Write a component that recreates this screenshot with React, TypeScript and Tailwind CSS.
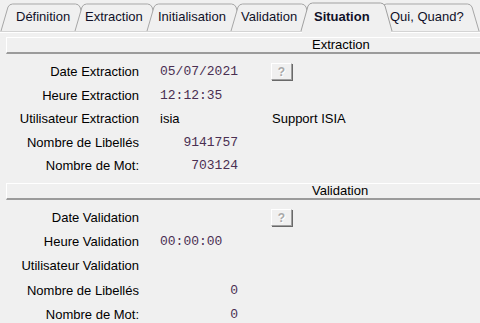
import React from "react";

const tabs = [
  { label: "Définition", w: 74, pl: 15 },
  { label: "Extraction", w: 72, pl: 10 },
  { label: "Initialisation", w: 84, pl: 11 },
  { label: "Validation", w: 70, pl: 10 },
  { label: "Situation", w: 77, pl: 13, active: true },
  { label: "Qui, Quand?", w: 100, pl: 12 },
];

function tabPath(a: number, r: number, top = 4) {
  return `M${a},31 L${a + 7},${top + 3} Q${a + 8.5},${top} ${a + 11.5},${top} L${r - 11.5},${top} Q${r - 8.5},${top} ${r - 7},${top + 3} L${r},31`;
}

function TabStrip() {
  const starts = [1, 75, 147, 231];
  return (
    <div className="relative h-[33px]">
      <svg className="absolute left-0 top-0" width="480" height="33" viewBox="0 0 480 33">
        <line x1="0" y1="31.5" x2="480" y2="31.5" stroke="#d4d4d4" />
        <line x1="0" y1="32.5" x2="480" y2="32.5" stroke="#ffffff" />
        {starts.map((a, i) => {
          const next = i < 3 ? starts[i + 1] : 301;
          return (
            <path key={i} d={tabPath(a, next + 12)} fill="#f0f0f0" stroke="#a7a7a7" strokeWidth="1" />
          );
        })}
        <path d={tabPath(375, 479)} fill="#f0f0f0" stroke="#a7a7a7" strokeWidth="1" />
        <path d={tabPath(301, 392, 3) + " Z"} fill="#f0f0f0" stroke="none" />
        <path d={tabPath(301, 392, 3)} fill="none" stroke="#a0a0a0" strokeWidth="1" />
        <rect x="302" y="31" width="89" height="3" fill="#f0f0f0" />
      </svg>
      <div className="relative flex pl-[1px]">
        {tabs.map((t) => (
          <div
            key={t.label}
            className={
              "h-[31px] shrink-0 whitespace-nowrap pt-[9px] leading-[16px] text-[13px] text-[#101028] " +
              (t.active ? "font-bold" : "")
            }
            style={{ width: t.w, paddingLeft: t.pl }}
          >
            {t.label}
          </div>
        ))}
      </div>
    </div>
  );
}

function SectionBar({ title }: { title: string }) {
  return (
    <div className="ml-[6px] h-[17px] border-l border-t border-b-2 border-l-white border-t-white border-b-[#9b9b9b] bg-[#f0f0f0] pl-[305px] text-[13px] leading-[14px] text-black whitespace-nowrap">
      {title}
    </div>
  );
}

function Row({ label, children, tall }: { label: string; children?: React.ReactNode; tall?: boolean }) {
  return (
    <div className={"flex items-center " + (tall ? "h-[24.25px]" : "h-[23.5px]")}>
      <div className="w-[139px] shrink-0 whitespace-nowrap text-right">{label}</div>
      <div className="ml-[21px] flex items-center">{children}</div>
    </div>
  );
}

function Mono({ children, right }: { children: React.ReactNode; right?: boolean }) {
  return (
    <span
      className={
        "inline-block w-[78px] font-['Liberation_Mono',monospace] text-[13px] text-[#4a2f52] " +
        (right ? "text-right" : "")
      }
    >
      {children}
    </span>
  );
}

function HelpButton() {
  return (
    <div className="ml-[33px] flex h-[17px] w-[21px] items-center justify-center border-l border-t border-r border-b border-l-white border-t-white border-r-[#a0a0a0] border-b-[#a0a0a0] bg-[#f0f0f0] shadow-[1px_1px_0_#696969] text-[12px] font-bold leading-none text-[#a8a8a8] [text-shadow:1px_1px_0_#ffffff]">
      ?
    </div>
  );
}

export default function App() {
  return (
    <div className="h-[323px] w-[480px] overflow-hidden bg-[#f0f0f0] font-['Liberation_Sans',Arial,sans-serif] text-[13px] text-black">
      <TabStrip />
      <div className="pt-[4px]">
        <SectionBar title="Extraction" />
        <div className="pt-[6px]">
          <Row label="Date Extraction">
            <Mono>05/07/2021</Mono>
            <HelpButton />
          </Row>
          <Row label="Heure Extraction">
            <Mono>12:12:35</Mono>
          </Row>
          <Row label="Utilisateur Extraction">
            <span className="inline-block w-[112px]">isia</span>
            <span>Support ISIA</span>
          </Row>
          <Row label="Nombre de Libellés">
            <Mono right>9141757</Mono>
          </Row>
          <Row label="Nombre de Mot:">
            <Mono right>703124</Mono>
          </Row>
        </div>
        <div className="pt-[5px]">
          <SectionBar title="Validation" />
        </div>
        <div className="pt-[6px]">
          <Row tall label="Date Validation">
            <span className="inline-block w-[78px]" />
            <HelpButton />
          </Row>
          <Row tall label="Heure Validation">
            <Mono>00:00:00</Mono>
          </Row>
          <Row tall label="Utilisateur Validation" />
          <Row tall label="Nombre de Libellés">
            <Mono right>0</Mono>
          </Row>
          <Row tall label="Nombre de Mot:">
            <Mono right>0</Mono>
          </Row>
        </div>
      </div>
    </div>
  );
}
